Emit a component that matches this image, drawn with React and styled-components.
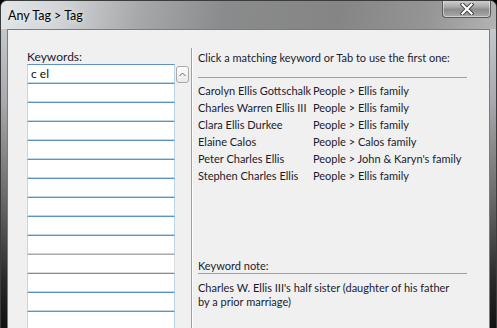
import React from "react";
import styled, { createGlobalStyle } from "styled-components";

const GlobalStyle = createGlobalStyle`
  html, body {
    margin: 0;
    padding: 0;
    background: #000;
  }
  body {
    font-family: "Segoe UI", Lato, "Liberation Sans", sans-serif;
    font-size: 11px;
  }
`;

const Window = styled.div`
  width: 497px;
  height: 328px;
  box-sizing: border-box;
  overflow: hidden;
  display: flex;
  flex-direction: column;
  border: 1px solid #3c3c3c;
  border-bottom: none;
  border-radius: 7px 7px 0 0;
  background: linear-gradient(
    to bottom,
    #cfd3d7 0%,
    #a9abae 30%,
    #6a6a6a 60%,
    #2a2a2a 85%,
    #111 100%
  );
`;

const TitleBar = styled.div`
  height: 28px;
  flex: none;
  display: flex;
  align-items: flex-start;
  padding: 0 5px 0 7px;
  background: linear-gradient(
    100deg,
    #e3e6e9 0%,
    #d2d5d8 12%,
    #a6a8aa 28%,
    #8a8b8c 45%,
    #858585 68%,
    #959595 86%,
    #b3b3b3 100%
  );
`;

const Title = styled.div`
  flex: 1;
  padding-top: 7px;
  color: #000;
  font-size: 12.5px;
  text-shadow: 0 0 6px rgba(255, 255, 255, 0.9);
`;

const CloseButton = styled.div`
  width: 47px;
  height: 17px;
  margin-top: -1px;
  display: flex;
  align-items: center;
  justify-content: center;
  border: 1px solid #5a5a5a;
  border-top: none;
  border-radius: 0 0 4px 4px;
  background: linear-gradient(to bottom, #d4d4d4 0%, #a3a3a3 45%, #8c8c8c 55%, #a9a9a9 100%);
  box-shadow: inset 0 0 0 1px rgba(255, 255, 255, 0.45);
`;

const Client = styled.div`
  flex: 1;
  margin: 0 6px;
  display: flex;
  background: #f0f0f0;
  border: 1px solid #7c7c7c;
  border-bottom: none;
  color: #1b1b2e;
  overflow: hidden;
`;

const LeftPane = styled.div`
  display: flex;
  padding: 20px 0 0 19px;
`;

const KeywordColumn = styled.div`
  width: 148px;
  display: flex;
  flex-direction: column;
`;

const FieldLabel = styled.div`
  height: 15px;
  line-height: 14px;
  font-size: 12px;
`;

const KeywordBox = styled.div`
  height: 19px;
  box-sizing: border-box;
  flex: none;
  background: #fff;
  border: 1px solid ${(p) => (p.$muted ? "#dcdcdc" : "#bcd6ec")};
  border-top-color: ${(p) => (p.$muted ? "#ababab" : "#5e93c4")};
  padding: 1px 3px;
  line-height: 16px;
  font-size: 12px;
  color: #111;
`;

const ScrollButton = styled.div`
  width: 11px;
  height: 15px;
  margin: 16px 0 0 1px;
  display: flex;
  align-items: center;
  justify-content: center;
  border: 1px solid #a9a9a9;
  border-radius: 3px;
  background: linear-gradient(to bottom, #fdfdfd, #e9e9e9);
`;

const Divider = styled.div`
  width: 1px;
  margin: 18px 0 0 2px;
  background: #a0a0a0;
  box-shadow: 1px 0 0 #fff;
`;

const RightPane = styled.div`
  width: 269px;
  padding: 20px 0 0 6px;
  display: flex;
  flex-direction: column;
`;

const Heading = styled.div`
  height: 27px;
  line-height: 15px;
  border-bottom: 1px solid #a0a0a0;
  white-space: nowrap;
`;

const MatchList = styled.div`
  padding-top: 4px;
  display: flex;
  flex-direction: column;
`;

const MatchRow = styled.div`
  display: grid;
  grid-template-columns: 115px 1fr;
  height: 17px;
  line-height: 17px;
  white-space: nowrap;
`;

const NoteLabel = styled.div`
  margin-top: 75px;
  height: 14px;
  line-height: 14px;
  border-bottom: 1px solid #a0a0a0;
`;

const NoteText = styled.div`
  width: 262px;
  padding-top: 7px;
  line-height: 14px;
`;

const matches = [
  ["Carolyn Ellis Gottschalk", "People > Ellis family"],
  ["Charles Warren Ellis III", "People > Ellis family"],
  ["Clara Ellis Durkee", "People > Ellis family"],
  ["Elaine Calos", "People > Calos family"],
  ["Peter Charles Ellis", "People > John & Karyn's family"],
  ["Stephen Charles Ellis", "People > Ellis family"],
];

const boxes = Array.from({ length: 14 }, (_, i) => i);

export default function App() {
  return (
    <>
      <GlobalStyle />
      <Window>
        <TitleBar>
          <Title>Any Tag &gt; Tag</Title>
          <CloseButton>
            <svg width="14" height="12" viewBox="0 0 14 12">
              <path
                d="M2.5 1.5 L11.5 10.5 M11.5 1.5 L2.5 10.5"
                stroke="#3a3a3a"
                strokeWidth="4"
                strokeLinecap="square"
              />
              <path
                d="M2.5 1.5 L11.5 10.5 M11.5 1.5 L2.5 10.5"
                stroke="#fff"
                strokeWidth="2.2"
                strokeLinecap="square"
              />
            </svg>
          </CloseButton>
        </TitleBar>
        <Client>
          <LeftPane>
            <KeywordColumn>
              <FieldLabel>Keywords:</FieldLabel>
              {boxes.map((i) => (
                <KeywordBox key={i} $muted={i === 10}>
                  {i === 0 ? "c el" : ""}
                </KeywordBox>
              ))}
            </KeywordColumn>
            <ScrollButton>
              <svg width="7" height="5" viewBox="0 0 7 5">
                <path d="M0.5 4 L3.5 1 L6.5 4" fill="none" stroke="#6a6a6a" strokeWidth="1" />
              </svg>
            </ScrollButton>
          </LeftPane>
          <Divider />
          <RightPane>
            <Heading>Click a matching keyword or Tab to use the first one:</Heading>
            <MatchList>
              {matches.map(([name, path]) => (
                <MatchRow key={name}>
                  <span>{name}</span>
                  <span>{path}</span>
                </MatchRow>
              ))}
            </MatchList>
            <NoteLabel>Keyword note:</NoteLabel>
            <NoteText>
              Charles W. Ellis III's half sister (daughter of his father by a prior marriage)
            </NoteText>
          </RightPane>
        </Client>
      </Window>
    </>
  );
}
